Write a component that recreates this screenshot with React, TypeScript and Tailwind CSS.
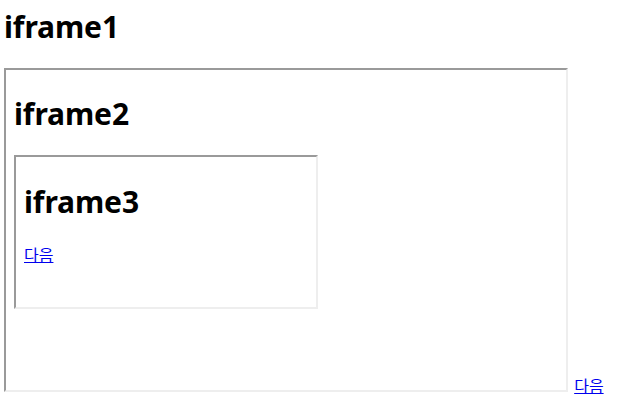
export default function App() {
  const font = { fontFamily: '"Noto Sans", "Noto Sans CJK KR", sans-serif' };
  const h1 = "m-0 text-[30px] font-bold leading-[42.56px] tracking-[-0.1px]";
  return (
    <div className="bg-white w-[623px] h-[411px] overflow-hidden px-1 pt-[6px] text-black text-[16px]" style={font}>
      <h1 className={h1}>iframe1</h1>
      <div className="mt-[19.44px] leading-[21px]">
        <div className="inline-block overflow-hidden w-[564px] h-[324px] border-2 border-t-[#9a9a9a] border-l-[#9a9a9a] border-b-[#eeeeee] border-r-[#eeeeee] align-baseline">
          <div className="px-2 pt-[23.44px]">
            <h1 className={h1}>iframe2</h1>
            <div className="mt-[19.44px]">
              <div className="inline-block overflow-hidden w-[304px] h-[154px] border-2 border-t-[#9a9a9a] border-l-[#9a9a9a] border-b-[#eeeeee] border-r-[#eeeeee] align-baseline">
                <div className="px-2 pt-[23.44px]">
                  <h1 className={h1}>iframe3</h1>
                  <p className="mt-[21.5px] leading-[21px]">
                    <a href="#" className="text-[#0000ee] underline">다음</a>
                  </p>
                </div>
              </div>
            </div>
          </div>
        </div>{" "}
        <a href="#" className="ml-[2px] text-[#0000ee] underline">다음</a>
      </div>
    </div>
  );
}
